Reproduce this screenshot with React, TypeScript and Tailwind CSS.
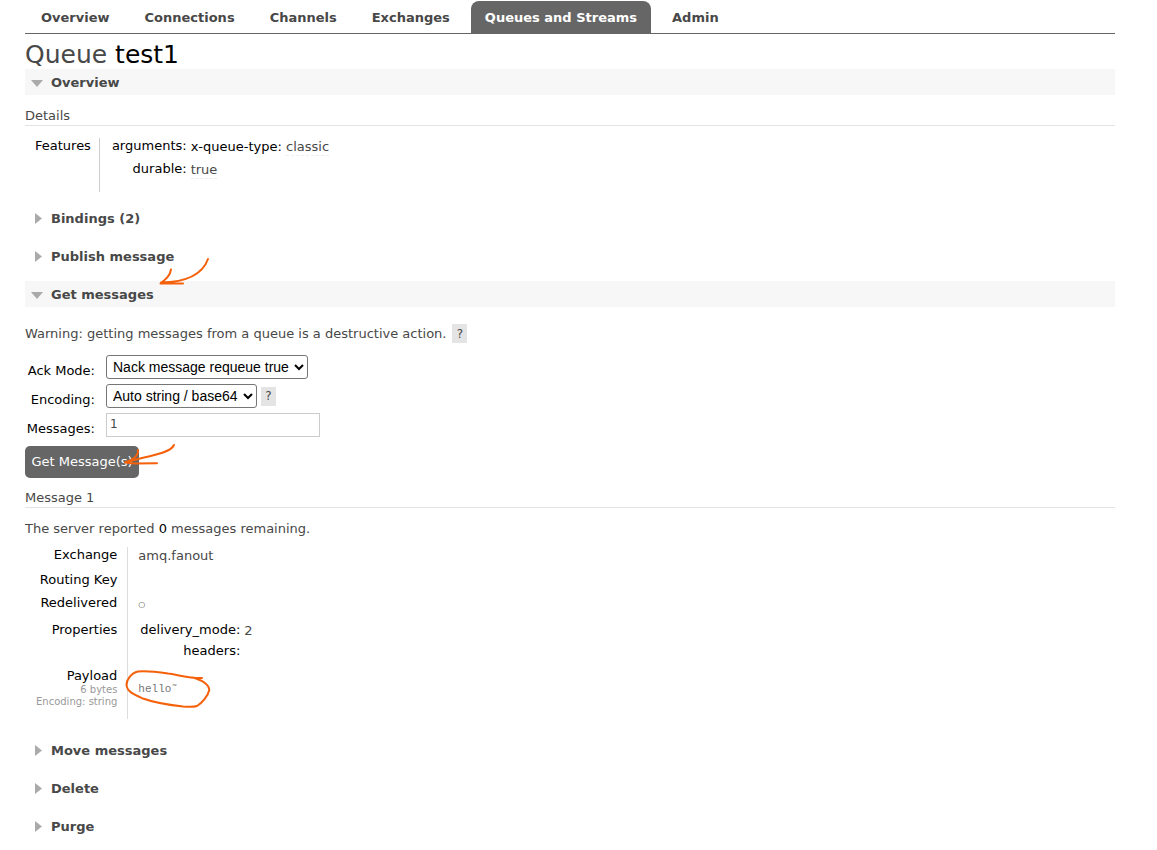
import type { ReactNode } from "react"

const tabs = ["Overview", "Connections", "Channels", "Exchanges", "Queues and Streams", "Admin"]
const activeTab = "Queues and Streams"

function SectionHeading({ title, open = false, children }: { title: string; open?: boolean; children?: ReactNode }) {
  return (
    <h2 className={open ? "relative bg-[#f7f7f7]" : "relative"}>
      <button
        type="button"
        aria-expanded={open}
        className="flex h-[26px] w-full items-start gap-2 pt-1.5 pl-1.5 text-left text-[13px] leading-4 font-bold text-[#484848]"
      >
        <svg className="mt-0.5" width="12" height="12" viewBox="0 0 12 12" fill="#aaa" aria-hidden="true">
          {open ? <path d="M0 3h12L6 10z" /> : <path d="M4 0v11l7-5.500z" />}
        </svg>
        {title}
      </button>
      {children}
    </h2>
  )
}

function SubHeading({ children }: { children: ReactNode }) {
  return <h3 className="border-b border-[#e4e4e4] text-[13px] leading-[18px]">{children}</h3>
}

function Help() {
  return (
    <button type="button" aria-label="Help" className="h-[19px] w-[15px] bg-[#e4e4e4] text-xs text-[#484848]">
      ?
    </button>
  )
}

export default function App() {
  return (
    <div className="bg-white pr-[42px] pb-2.5 pl-[25px] font-['DejaVu_Sans',Verdana,sans-serif] text-[13px] leading-4 text-[#484848]">
      <nav className="flex gap-[7px] border-b border-[#666] pt-px pl-0.5">
        {tabs.map((tab) => (
          <a
            key={tab}
            href="#"
            className={
              tab === activeTab
                ? "rounded-t-lg bg-[#666] px-3.5 pt-[9px] pb-[7px] font-bold whitespace-nowrap text-white"
                : "px-3.5 pt-[9px] pb-[7px] font-bold whitespace-nowrap"
            }
          >
            {tab}
          </a>
        ))}
      </nav>

      <h1 className="pt-1.5 text-[25px] leading-[29px]">
        Queue <b className="font-normal text-black">test1</b>
      </h1>

      {/* Overview */}
      <SectionHeading title="Overview" open />
      <div className="pt-3">
        <SubHeading>Details</SubHeading>
        <table className="mt-3 mb-[13px] border-collapse">
          <tbody>
            <tr className="h-[54px] align-top">
              <th className="border-r border-[#ccc] pr-2 pl-2.5 text-right font-normal text-black">Features</th>
              <td className="pl-3">
                <table className="border-collapse">
                  <tbody>
                    <tr className="h-[23px] align-top">
                      <th className="text-right font-normal text-black">arguments:</th>
                      <td className="pl-1">
                        <span className="text-black">x-queue-type:</span>{" "}
                        <abbr className="inline-block border-b border-dashed border-[#eee] pt-px">classic</abbr>
                      </td>
                    </tr>
                    <tr className="align-top">
                      <th className="text-right font-normal text-black">durable:</th>
                      <td className="pl-1">
                        <abbr className="inline-block border-b border-dashed border-[#eee] pt-px">true</abbr>
                      </td>
                    </tr>
                  </tbody>
                </table>
              </td>
            </tr>
          </tbody>
        </table>
      </div>

      <div className="flex flex-col gap-3">
        <SectionHeading title="Bindings (2)" />
        <SectionHeading title="Publish message" />
        <SectionHeading title="Get messages" open>
          <svg
            className="pointer-events-none absolute -top-6 left-[133px]"
            width="54"
            height="30"
            viewBox="158 257 54 30"
            fill="none"
            stroke="#f5600a"
            strokeWidth="2"
            strokeLinecap="round"
            strokeLinejoin="round"
            aria-hidden="true"
          >
            <path d="M208 259C203 273 189 282 161 282.500M171 269.500C170 276 166 279 160.500 283.500L183 283.500" />
          </svg>
        </SectionHeading>
      </div>

      {/* Get messages */}
      <form className="pt-[17px]" onSubmit={(e) => e.preventDefault()}>
        <p className="flex items-center gap-1.5">
          Warning: getting messages from a queue is a destructive action.
          <Help />
        </p>
        <div className="mt-3 grid grid-cols-[70px_1fr] gap-x-[11px] gap-y-[5px] text-black">
          <label htmlFor="ackmode" className="pt-2 text-right">
            Ack Mode:
          </label>
          <div className="flex h-6">
            <select
              id="ackmode"
              className="w-[202px] rounded-[3px] border border-[#767676] bg-white pl-0.5 font-['Liberation_Sans',Arial,sans-serif] text-[14px]"
            >
              <option>Nack message requeue true</option>
            </select>
          </div>
          <label htmlFor="encoding" className="pt-2 text-right">
            Encoding:
          </label>
          <div className="flex h-6 items-center gap-1">
            <select
              id="encoding"
              className="h-6 w-[151px] rounded-[3px] border border-[#767676] bg-white pl-0.5 font-['Liberation_Sans',Arial,sans-serif] text-[14px]"
            >
              <option>Auto string / base64</option>
            </select>
            <Help />
          </div>
          <label htmlFor="count" className="pt-2 text-right">
            Messages:
          </label>
          <div className="flex h-6">
            <input
              id="count"
              type="text"
              defaultValue="1"
              className="w-[214px] border border-[#ccc] px-[3px] pb-0.5 text-xs text-[#484848]"
            />
          </div>
        </div>
        <div className="relative mt-[9px]">
          <button type="submit" className="h-8 w-[114px] rounded-[5px] bg-[#666] text-[13px] whitespace-nowrap text-white">
            Get Message(s)
          </button>
          <svg
            className="pointer-events-none absolute -top-1 left-[98px]"
            width="54"
            height="26"
            viewBox="123 443 54 26"
            fill="none"
            stroke="#f5600a"
            strokeWidth="2"
            strokeLinecap="round"
            strokeLinejoin="round"
            aria-hidden="true"
          >
            <path d="M174 446C171 453 155 456 138 460L125 463.500M138 451C138.500 457 134 460 125 463.500L135 464.500L157 464.300" />
          </svg>
        </div>
      </form>

      {/* Fetched message */}
      <div className="pt-[11px]">
        <SubHeading>Message 1</SubHeading>
        <p className="mt-[13px]">
          The server reported <b className="font-normal text-black">0</b> messages remaining.
        </p>
        <table className="mt-2.5 mb-[18px] border-collapse">
          <tbody className="[&_th]:border-r [&_th]:border-[#ddd] [&_th]:pr-2.5 [&_th]:pl-[11px] [&_th]:text-right [&_th]:font-normal [&_th]:text-black">
            <tr className="h-[25px] align-top">
              <th>Exchange</th>
              <td className="pt-px pl-2.5">amq.fanout</td>
            </tr>
            <tr className="h-[23px] align-top">
              <th>Routing Key</th>
              <td />
            </tr>
            <tr className="h-[27px] align-top">
              <th>Redelivered</th>
              <td className="pt-1 pl-2.5 text-[8px] leading-3">○</td>
            </tr>
            <tr className="h-[46px] align-top">
              <th>Properties</th>
              <td className="pl-3">
                <dl className="grid grid-cols-[auto_auto] gap-x-1 gap-y-[5px]">
                  <dt className="text-right text-black">delivery_mode:</dt>
                  <dd className="h-4 pt-px">2</dd>
                  <dt className="text-right text-black">headers:</dt>
                  <dd />
                </dl>
              </td>
            </tr>
            <tr className="h-[51px] align-top">
              <th>
                Payload
                <small className="block text-[10px] leading-3 text-[#999]">6 bytes</small>
                <small className="block text-[10px] leading-3 text-[#999]">Encoding: string</small>
              </th>
              <td className="relative pt-[13px] pl-2.5">
                <pre className="font-['Liberation_Mono',monospace] text-[11px] leading-4 text-[#777]">hello˜</pre>
                <svg
                  className="pointer-events-none absolute top-0 -left-1"
                  width="90"
                  height="42"
                  viewBox="124 668 90 42"
                  fill="none"
                  stroke="#f5600a"
                  strokeWidth="2"
                  strokeLinecap="round"
                  strokeLinejoin="round"
                  aria-hidden="true"
                >
                  <path d="M202 678C191 679 180 675 168 673.500C158 672 147 670.500 138 671.500C131 673 126.500 680 126.500 685C127 692 135 695 143 698.500C155 703 170 705 183 706.500C189 707 194 707 197 706C202 703 208 696 209.300 690C209 684 201 680 193 677.500" />
                </svg>
              </td>
            </tr>
          </tbody>
        </table>
      </div>

      <div className="flex flex-col gap-3">
        <SectionHeading title="Move messages" />
        <SectionHeading title="Delete" />
        <SectionHeading title="Purge" />
      </div>
    </div>
  )
}
